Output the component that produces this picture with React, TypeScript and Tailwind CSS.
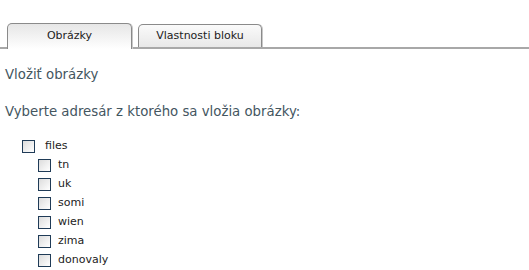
import React from "react";

const Box = () => (
  <span className="inline-block w-[13px] h-[13px] border border-[#1f3b57] bg-gradient-to-br from-[#dcdcdc] to-[#ffffff] shrink-0" />
);

export default function App() {
  const kids = ["tn", "uk", "somi", "wien", "zima", "donovaly"];
  return (
    <div className="w-[529px] h-[270px] bg-white overflow-hidden" style={{ fontFamily: '"DejaVu Sans", Verdana, sans-serif' }}>
      <div className="pt-[23px] flex items-end pl-[7px] gap-[6px] border-b-2 border-b-[#a8a8a8] h-[49px]">
        <div className="w-[125px] h-[26px] -mb-[2px] border border-[#8a8a8a] border-b-0 rounded-t-[5px] bg-gradient-to-b from-[#e6e6e6] to-[#ffffff] flex items-center justify-center text-[11px] text-[#222] shadow-[1px_0_0_#c8c8c8]">
          Obrázky
        </div>
        <div className="w-[124px] h-[23px] border border-[#8a8a8a] border-b-0 rounded-t-[5px] bg-gradient-to-b from-[#fafafa] to-[#e8e8e8] flex items-center justify-center text-[11px] text-[#222] shadow-[1px_0_0_#c8c8c8]">
          Vlastnosti bloku
        </div>
      </div>
      <div className="pl-[5px] text-[13.3px] text-[#44565f] leading-[16px]">
        <div className="mt-[18px]">Vložiť obrázky</div>
        <div className="mt-[21px]">Vyberte adresár z ktorého sa vložia obrázky:</div>
      </div>
      <div className="mt-[17px] pl-[22px] text-[11px] text-[#222]">
        <div className="flex items-center gap-[10px] h-[19px]">
          <Box />
          <span>files</span>
        </div>
        <div className="pl-[16px]">
          {kids.map((k) => (
            <div key={k} className="flex items-center gap-[7px] h-[19px]">
              <Box />
              <span>{k}</span>
            </div>
          ))}
        </div>
      </div>
    </div>
  );
}
